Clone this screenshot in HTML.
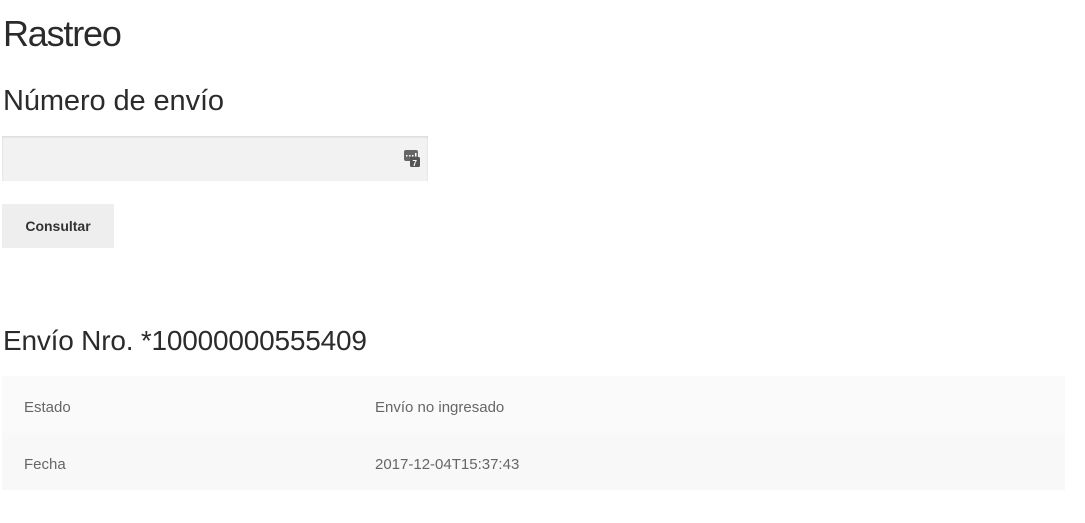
<!DOCTYPE html>
<html><head><meta charset="utf-8"><style>
body{margin:0;background:#fff;font-family:"Liberation Sans",sans-serif;color:#333;width:1085px;height:523px;overflow:hidden;position:relative}
h1{position:absolute;left:3px;top:13px;margin:0;font-weight:normal;font-size:36px;letter-spacing:-1.2px;color:#2b2b2b}
h2{position:absolute;left:3px;margin:0;font-weight:normal;color:#2b2b2b}
.inp{position:absolute;left:2px;top:136px;width:426px;height:45px;background:#f2f2f2;box-shadow:inset 0 1px 2px rgba(0,0,0,.12)}
.btn{position:absolute;left:2px;top:204px;width:112px;height:44px;background:#eeeeee;font-weight:bold;font-size:14px;line-height:44px;text-align:center;color:#333}
.row{position:absolute;left:2px;width:1063px;height:57px;font-size:15px;color:#666;line-height:63px;overflow:hidden}
.row span{position:absolute}
</style></head><body>
<h1>Rastreo</h1>
<h2 style="top:85px;font-size:29px;letter-spacing:-0.1px">Número de envío</h2>
<div class="inp">
<svg style="position:absolute;left:402px;top:14px" width="17" height="17" viewBox="0 0 17 17"><rect x="0" y="0" width="14" height="11" rx="2" fill="#666"/><rect x="6" y="7" width="10" height="10" rx="1.5" fill="#555"/><rect x="2" y="5" width="1.5" height="1.5" fill="#fff"/><rect x="5" y="5" width="1.5" height="1.5" fill="#fff"/><rect x="8" y="5" width="1.5" height="1.5" fill="#fff"/><rect x="11" y="3" width="1.5" height="3.5" fill="#fff"/><text x="8.5" y="16" font-size="8" font-weight="bold" fill="#fff" font-family="Liberation Sans">7</text></svg>
</div>
<div class="btn">Consultar</div>
<h2 style="top:325px;font-size:28px;letter-spacing:-0.2px">Envío Nro. *10000000555409</h2>
<div class="row" style="top:376px;background:#fafafa"><span style="left:22px">Estado</span><span style="left:373px">Envío no ingresado</span></div>
<div class="row" style="top:433px;background:#f8f8f8"><span style="left:22px">Fecha</span><span style="left:373px">2017-12-04T15:37:43</span></div>
</body></html>
